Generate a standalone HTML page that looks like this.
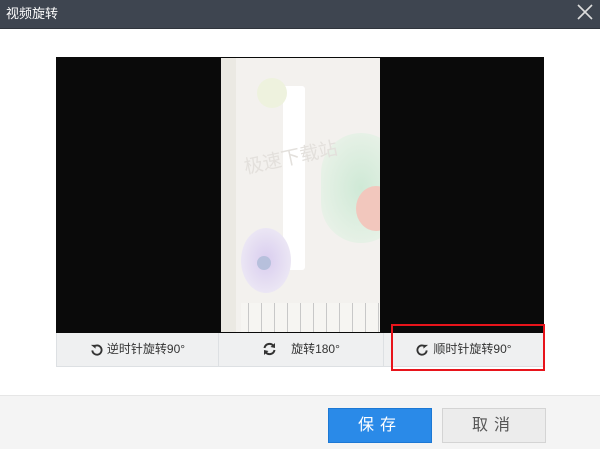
<!DOCTYPE html>
<html><head><meta charset="utf-8"><style>
*{margin:0;padding:0;box-sizing:border-box}
body{width:600px;height:449px;background:#fff;position:relative;overflow:hidden;font-family:"Liberation Sans","Noto Sans CJK SC",sans-serif}
.title{position:absolute;left:0;top:0;width:600px;height:29px;background:#3e4550;color:#fff;font-size:13px;line-height:28px;padding-left:6px;border-bottom:1px solid #2f343c}
.x{position:absolute;right:6px;top:3px;width:18px;height:18px}
.video{position:absolute;left:56px;top:57px;width:488px;height:276px;background:#0a0a0a}
.img{position:absolute;left:165px;top:1px;width:159px;height:274px;background:#f3f1ee;overflow:hidden}
.btns{position:absolute;left:56px;top:333px;width:488px;height:34px;background:#eff0f1;border:1px solid #dde0e3;border-top:none}
.b{position:absolute;top:0;height:33px;font-size:12px;color:#333;line-height:33px;text-align:center}
.b svg{vertical-align:-3px;margin-right:4px}
.red{position:absolute;left:391px;top:324px;width:154px;height:47px;border:2px solid #e8141b}
.foot{position:absolute;left:0;top:395px;width:600px;height:54px;background:#f4f4f4;border-top:1px solid #e6e6e6}
.save{position:absolute;left:328px;top:408px;width:104px;height:35px;background:#2a8ae8;border:1px solid #1d78d4;color:#fff;font-size:16px;text-align:center;line-height:33px;letter-spacing:6px}
.cancel{position:absolute;left:442px;top:408px;width:104px;height:35px;background:#ececec;border:1px solid #d4d4d4;color:#555;font-size:16px;text-align:center;line-height:33px;letter-spacing:6px}
</style></head><body>
<div class="title">视频旋转
<svg class="x" viewBox="0 0 18 18"><path d="M2 2L16 16M16 2L2 16" stroke="#ddd" stroke-width="1.6"/></svg></div>
<div class="video"><div class="img">
<div style="position:absolute;left:0;top:0;width:15px;height:274px;background:#ebe9e3"></div>
<div style="position:absolute;left:62px;top:28px;width:22px;height:184px;background:#fff;border-radius:3px"></div>
<div style="position:absolute;left:100px;top:75px;width:80px;height:110px;border-radius:40px;background:radial-gradient(#cfe9d6,#e6f1e6 70%,transparent)"></div>
<div style="position:absolute;left:135px;top:128px;width:40px;height:45px;border-radius:50%;background:#f2c7bd"></div>
<div style="position:absolute;left:20px;top:170px;width:50px;height:65px;border-radius:50%;background:radial-gradient(#d9cdef,#ebe6f4 70%,transparent)"></div>
<div style="position:absolute;left:36px;top:198px;width:14px;height:14px;border-radius:50%;background:#b7c0dc"></div>
<div style="position:absolute;left:36px;top:20px;width:30px;height:30px;border-radius:50%;background:#eef2de"></div>
<div style="position:absolute;left:20px;top:245px;width:139px;height:29px;background:repeating-linear-gradient(90deg,#f6f5f2 0 7px,#c8c8c8 7px 8px,#f6f5f2 8px 13px)"></div>
<div style="position:absolute;left:22px;top:85px;font-size:19px;color:#e3e0dc;transform:rotate(-12deg)">极速下载站</div>
</div></div>
<div class="btns">
<div class="b" style="left:0;width:162px;border-right:1px solid #dde0e3"><svg width="13" height="13" viewBox="0 0 14 14"><path d="M4 4A5 5 0 1 1 2.5 8" fill="none" stroke="#333" stroke-width="2"/><path d="M1 2L6 2L6 6Z" fill="#333"/></svg>逆时针旋转90°</div>
<div class="b" style="left:162px;width:165px;border-right:1px solid #dde0e3"><svg width="15" height="14" viewBox="0 0 15 14"><path d="M2.5 6A5 5 0 0 1 11.5 4M12.5 8A5 5 0 0 1 3.5 10" fill="none" stroke="#333" stroke-width="2"/><path d="M13 1L13 6L8.5 5Z M2 13L2 8L6.5 9Z" fill="#333"/></svg><span style="margin-left:10px">旋转180°</span></div>
<div class="b" style="left:327px;width:160px"><svg width="13" height="13" viewBox="0 0 14 14"><path d="M10 4A5 5 0 1 0 11.5 8" fill="none" stroke="#333" stroke-width="2"/><path d="M13 2L8 2L8 6Z" fill="#333"/></svg>顺时针旋转90°</div>
</div>
<div class="red"></div>
<div class="foot"></div>
<div class="save">保存</div>
<div class="cancel">取消</div>
</body></html>
